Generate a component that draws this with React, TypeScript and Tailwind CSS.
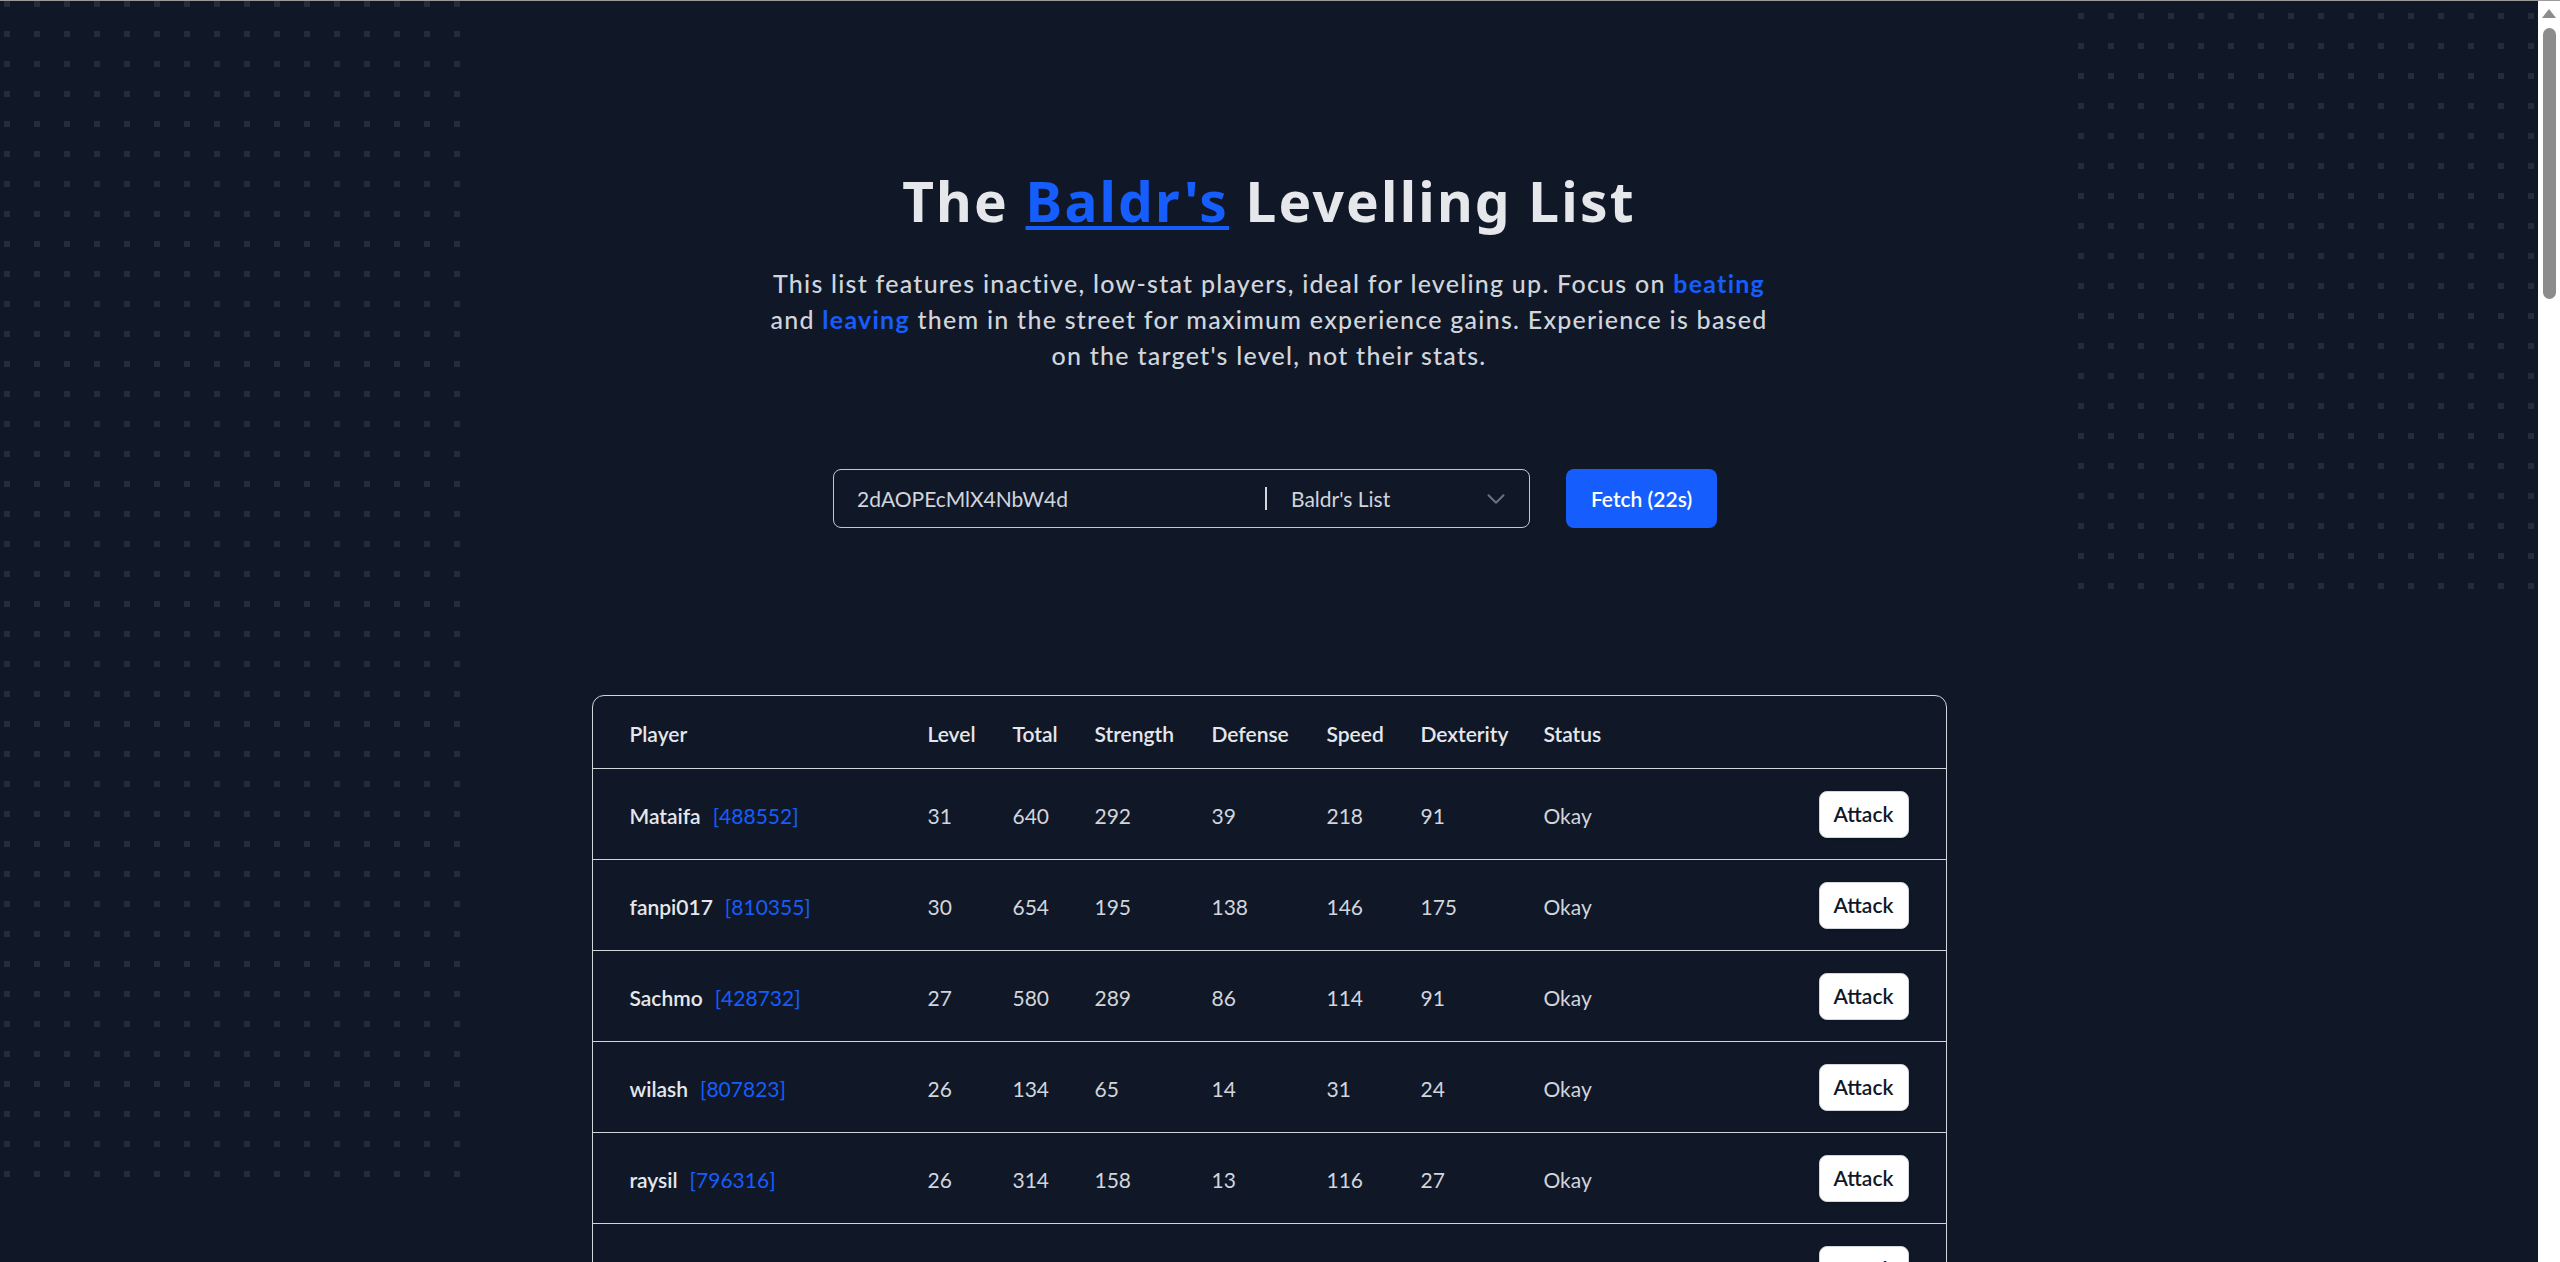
import React from "react";
import { ChevronDown } from "lucide-react";

// name, id, level, strength, defense, speed, dexterity
const rows: [string, number, number, number, number, number, number][] = [
  ["Mataifa", 488552, 31, 292, 39, 218, 91],
  ["fanpi017", 810355, 30, 195, 138, 146, 175],
  ["Sachmo", 428732, 27, 289, 86, 114, 91],
  ["wilash", 807823, 26, 65, 14, 31, 24],
  ["raysil", 796316, 26, 158, 13, 116, 27],
  ["Korvath", 702114, 25, 120, 88, 97, 60],
];

const cols =
  "grid grid-cols-[298px_85px_82px_117px_115px_94px_123px_1fr_auto] items-center px-[37px] pt-[4px]";

const headers = ["Player", "Level", "Total", "Strength", "Defense", "Speed", "Dexterity", "Status", ""];

function DotPattern({ id, x, y, className }: { id: string; x: number; y: number; className: string }) {
  return (
    <svg className={className} aria-hidden="true">
      <defs>
        <pattern id={id} width="30" height="30" patternUnits="userSpaceOnUse">
          <rect x={x} y={y} width="6" height="6" fill="#242c3a" />
        </pattern>
      </defs>
      <rect width="100%" height="100%" fill={`url(#${id})`} />
    </svg>
  );
}

export default function App() {
  return (
    <div className="flex h-screen flex-col bg-gray-900 font-[Lato,'Noto_Sans',sans-serif]">
      <div className="h-px shrink-0 bg-[#9a9a9a]" />
      <div className="flex min-h-0 flex-1">
        <main className="relative min-w-0 flex-1 overflow-hidden pt-[167px]">
          <DotPattern id="dots-left" x={4} y={0} className="pointer-events-none absolute left-0 top-0 h-[1180px] w-[470px]" />
          <DotPattern id="dots-right" x={20} y={12} className="pointer-events-none absolute right-0 top-0 h-[595px] w-[480px]" />

          <div className="relative">
            <h1 className="text-center font-['Noto_Sans',Lato,sans-serif] text-[55px] font-bold leading-[66px] tracking-[0.04em] text-gray-200">
              The{" "}
              <a href="#" className="text-blue-600 underline decoration-[4px] underline-offset-[4px]">
                Baldr's
              </a>{" "}
              Levelling List
            </h1>

            <p className="mx-auto mt-[31px] max-w-[1024px] text-center text-[25px] font-medium leading-[36px] tracking-[0.05em] text-gray-300">
              This list features inactive, low-stat players, ideal for leveling up. Focus on{" "}
              <span className="font-bold text-blue-600">beating</span> and{" "}
              <span className="font-bold text-blue-600">leaving</span> them in the street for maximum
              experience gains. Experience is based on the target's level, not their stats.
            </p>

            <div className="mt-[96px] flex justify-center gap-[36px] pl-[12px]">
              <div className="flex h-[59px] w-[697px] items-center rounded-lg border border-[#c4c7cc]">
                <input
                  readOnly
                  value="2dAOPEcMlX4NbW4d"
                  className="min-w-0 flex-1 bg-transparent pl-[23px] text-[21px] text-gray-300 outline-none"
                />
                <div className="h-[23px] w-[2px] bg-gray-300" />
                <div className="flex w-[262px] items-center justify-between pl-[24px] pr-[18px] text-[21px] text-gray-300">
                  <span>Baldr's List</span>
                  <ChevronDown className="h-[30px] w-[30px] text-gray-500" strokeWidth={1.6} />
                </div>
              </div>
              <button className="h-[59px] w-[151px] rounded-lg bg-blue-600 text-[21px] font-semibold text-white">
                Fetch (22s)
              </button>
            </div>

            <div className="mx-auto mt-[167px] w-[1355px] rounded-xl border border-gray-300">
              <div className={`${cols} h-[73px] border-b border-gray-300 text-[21px] font-semibold text-gray-200`}>
                {headers.map((h, i) => (
                  <div key={i}>{h}</div>
                ))}
              </div>
              {rows.map(([name, id, level, str, def, spd, dex]) => (
                <div key={id} className={`${cols} h-[91px] border-b border-gray-300 text-[21px] text-gray-300`}>
                  <div className="font-semibold text-gray-200">
                    {name}
                    <span className="ml-[12px] font-normal text-blue-600">[{id}]</span>
                  </div>
                  <div>{level}</div>
                  <div>{str + def + spd + dex}</div>
                  <div>{str}</div>
                  <div>{def}</div>
                  <div>{spd}</div>
                  <div>{dex}</div>
                  <div>Okay</div>
                  <button className="-mt-[4px] h-[47px] w-[90px] rounded-lg border border-gray-300 bg-white text-[21px] font-semibold text-gray-900 shadow-sm">
                    Attack
                  </button>
                </div>
              ))}
            </div>
          </div>
        </main>

        {/* browser scrollbar */}
        <div className="flex w-[22px] shrink-0 flex-col items-center bg-white">
          <svg width="14" height="9" viewBox="0 0 14 9" className="mt-[8px]">
            <polygon points="7,0 14,9 0,9" fill="#8c8c8c" />
          </svg>
          <div className="mt-[10px] h-[271px] w-[13px] rounded-full bg-[#8c8c8c]" />
        </div>
      </div>
    </div>
  );
}
